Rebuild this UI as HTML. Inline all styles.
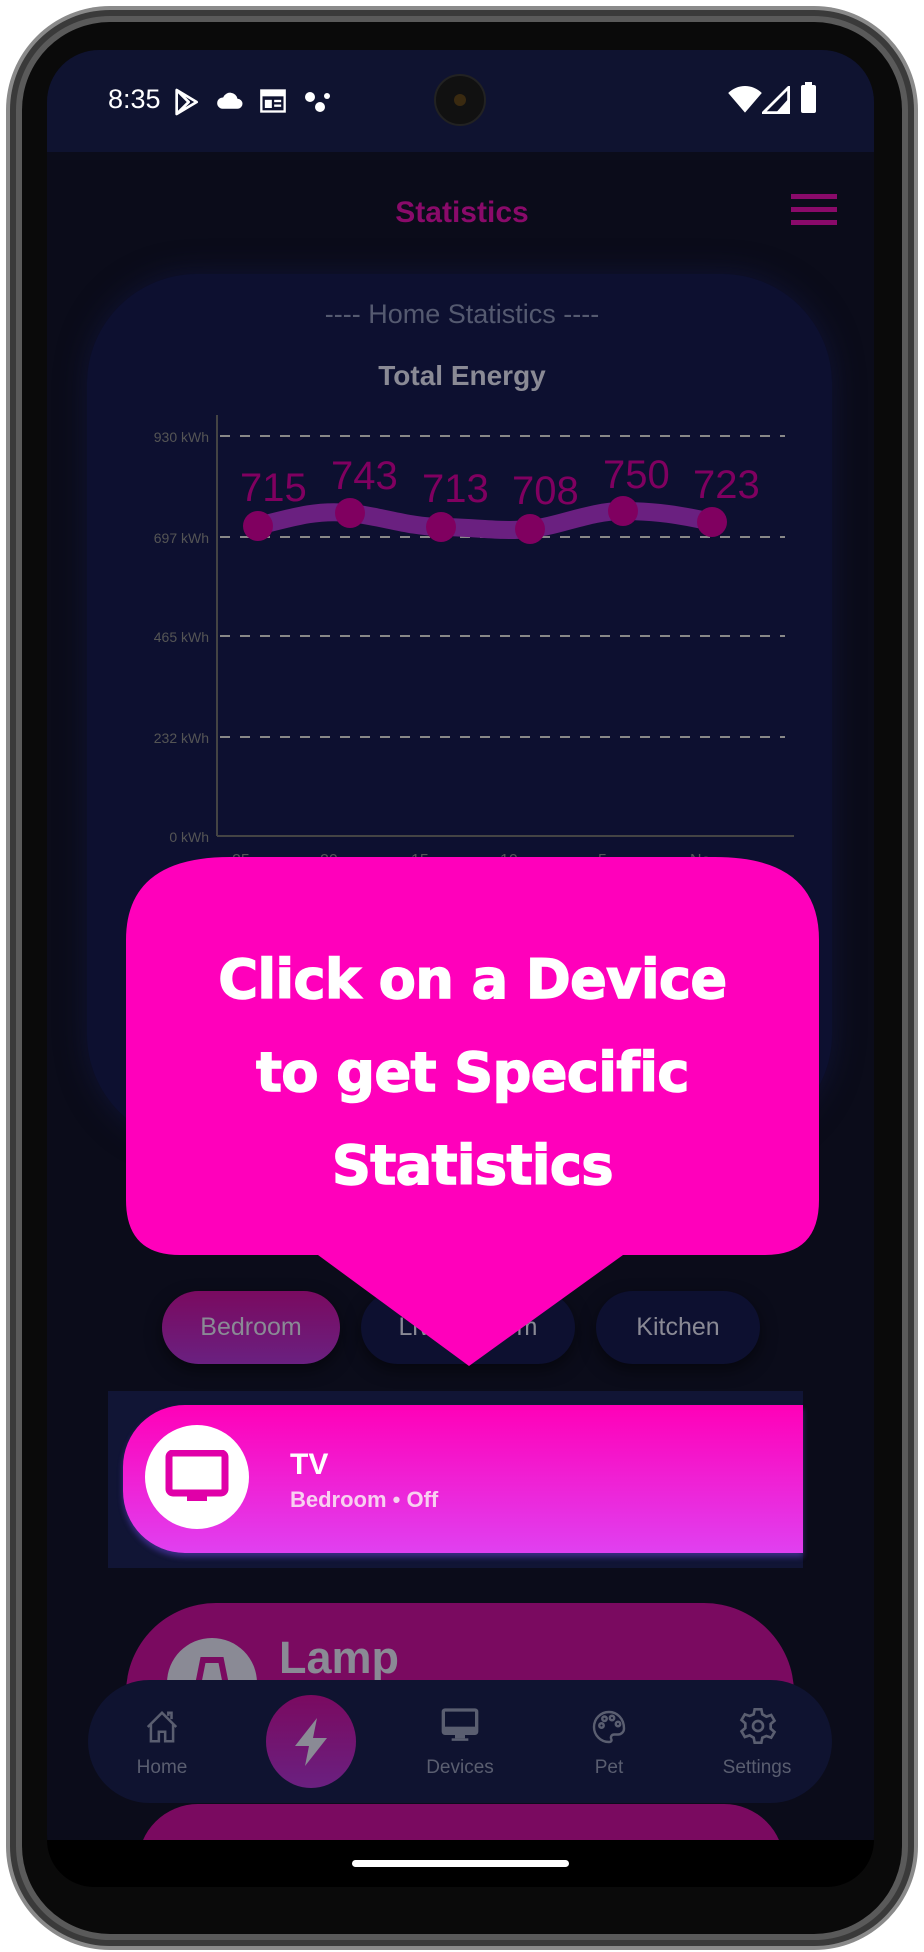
<!DOCTYPE html>
<html><head><meta charset="utf-8"><style>
*{margin:0;padding:0;box-sizing:border-box}
body{width:924px;height:1952px;background:#fff;position:relative;overflow:hidden;font-family:"Liberation Sans",sans-serif}
.abs{position:absolute}
</style></head><body>
<!-- phone frame -->
<div class="abs" style="left:6px;top:6px;width:912px;height:1944px;border-radius:104px;background:#8a8a8a"></div>
<div class="abs" style="left:10px;top:10px;width:904px;height:1936px;border-radius:100px;background:#3a3a3a"></div>
<div class="abs" style="left:16px;top:16px;width:892px;height:1924px;border-radius:94px;background:#5a5a5a"></div>
<div class="abs" style="left:22px;top:22px;width:880px;height:1912px;border-radius:88px;background:#0a0a0a"></div>
<div class="abs" style="left:47px;top:50px;width:827px;height:1837px;border-radius:52px;background:#0b0c1a;overflow:hidden">
  <div class="abs" style="left:0;top:0;width:827px;height:102px;background:#0f1330"></div>
</div>
<!-- status bar -->
<div class="abs" style="left:108px;top:84px;color:#fff;font-size:27px">8:35</div>
<svg class="abs" style="left:170px;top:86px" width="32" height="32" viewBox="0 0 24 24"><path d="M5 3v18l15-9z M5 3l9 9-9 9" fill="none" stroke="#fff" stroke-width="2" stroke-linejoin="round"/></svg>
<svg class="abs" style="left:215px;top:88px" width="30" height="24" viewBox="0 0 24 18"><path d="M6 16h12a4 4 0 0 0 0-8 6 6 0 0 0-11.5-1A4.5 4.5 0 0 0 6 16z" fill="#fff"/></svg>
<svg class="abs" style="left:259px;top:88px" width="28" height="26" viewBox="0 0 24 22"><rect x="2" y="2" width="20" height="18" fill="none" stroke="#fff" stroke-width="2"/><rect x="2" y="2" width="20" height="5" fill="#fff"/><rect x="5" y="10" width="6" height="7" fill="#fff"/><rect x="13" y="10" width="6" height="2" fill="#fff"/><rect x="13" y="14" width="6" height="2" fill="#fff"/></svg>
<svg class="abs" style="left:303px;top:90px" width="30" height="24" viewBox="0 0 30 24"><circle cx="7" cy="7" r="5" fill="#fff"/><circle cx="17" cy="17" r="5" fill="#fff"/><circle cx="24" cy="6" r="3" fill="#fff"/></svg>
<div class="abs" style="left:434px;top:74px;width:52px;height:52px;border-radius:50%;background:#111;border:2px solid #222"><div style="margin:18px auto;width:12px;height:12px;border-radius:50%;background:#3a2a10"></div></div>
<svg class="abs" style="left:728px;top:86px" width="34" height="28" viewBox="0 0 24 20"><path d="M12 19L0 5a17 17 0 0 1 24 0z" fill="#fff"/></svg>
<svg class="abs" style="left:762px;top:86px" width="28" height="28" viewBox="0 0 20 20"><path d="M19 1v18H1z" fill="none" stroke="#fff" stroke-width="2"/><path d="M19 9v10h-9z" fill="#fff"/></svg>
<div class="abs" style="left:801px;top:85px;width:15px;height:28px;background:#fff;border-radius:2px"></div>
<div class="abs" style="left:805px;top:82px;width:7px;height:4px;background:#fff"></div>
<!-- header -->
<div class="abs" style="left:0;width:924px;top:196px;text-align:center;color:#8a0a6a;font-size:30px;font-weight:bold">Statistics</div>
<div class="abs" style="left:791px;top:194px;width:46px;height:5px;background:#8a0a6a"></div>
<div class="abs" style="left:791px;top:207px;width:46px;height:5px;background:#8a0a6a"></div>
<div class="abs" style="left:791px;top:220px;width:46px;height:5px;background:#8a0a6a"></div>
<!-- card -->
<div class="abs" style="left:87px;top:274px;width:745px;height:870px;border-radius:110px;background:#0d1030;box-shadow:0 0 30px rgba(20,25,70,.6)"></div>
<div class="abs" style="left:0;width:924px;top:299px;text-align:center;color:#555a70;font-size:27px">---- Home Statistics ----</div>
<div class="abs" style="left:0;width:924px;top:360px;text-align:center;color:#8a8a95;font-size:28px;font-weight:bold">Total Energy</div>
<svg class="abs" style="left:0;top:400px" width="924" height="480" viewBox="0 400 924 480">
 <g stroke="#888" stroke-width="2" stroke-dasharray="10 10"><line x1="220" y1="436" x2="785" y2="436"/><line x1="220" y1="537" x2="785" y2="537"/><line x1="220" y1="636" x2="785" y2="636"/><line x1="220" y1="737" x2="785" y2="737"/></g>
 <line x1="217" y1="415" x2="217" y2="836" stroke="#444" stroke-width="2"/>
 <line x1="217" y1="836" x2="794" y2="836" stroke="#444" stroke-width="2"/>
 <g fill="#555" font-size="14" text-anchor="end"><text x="209" y="442">930 kWh</text><text x="209" y="543">697 kWh</text><text x="209" y="642">465 kWh</text><text x="209" y="743">232 kWh</text><text x="209" y="842">0 kWh</text></g>
 <g fill="#555" font-size="16"><text x="232" y="865">25</text><text x="320" y="865">20</text><text x="411" y="865">15</text><text x="500" y="865">10</text><text x="598" y="865">5</text><text x="690" y="865">No</text></g>
 <path d="M258 526C300 515 320 510 350 513S410 527 441 527S500 532 530 529S590 511 623 511S680 515 712 522" fill="none" stroke="#6a2080" stroke-width="18"/>
 <g fill="#800060"><circle cx="258" cy="526" r="15"/><circle cx="350" cy="513" r="15"/><circle cx="441" cy="527" r="15"/><circle cx="530" cy="529" r="15"/><circle cx="623" cy="511" r="15"/><circle cx="712" cy="522" r="15"/></g>
 <g fill="#800060" font-size="40"><text x="240" y="501">715</text><text x="331" y="489">743</text><text x="422" y="502">713</text><text x="512" y="504">708</text><text x="603" y="488">750</text><text x="693" y="498">723</text></g>
</svg>
<!-- tabs -->
<div class="abs" style="left:162px;top:1291px;width:178px;height:73px;border-radius:37px;background:linear-gradient(#7a0a60,#6a2080);color:#8a8a95;font-size:25px;text-align:center;line-height:73px;box-shadow:0 6px 16px rgba(0,0,0,.5)">Bedroom</div>
<div class="abs" style="left:361px;top:1291px;width:214px;height:73px;border-radius:37px;background:#0d1030;color:#8a8a95;font-size:25px;text-align:center;line-height:73px;box-shadow:0 6px 16px rgba(0,0,0,.5)">Living Room</div>
<div class="abs" style="left:596px;top:1291px;width:164px;height:73px;border-radius:37px;background:#0d1030;color:#8a8a95;font-size:25px;text-align:center;line-height:73px;box-shadow:0 6px 16px rgba(0,0,0,.5)">Kitchen</div>
<!-- bubble -->
<svg class="abs" style="left:0;top:850px" width="924" height="520" viewBox="0 850 924 520">
 <path d="M230 857H715Q819 857 819 940V1200Q819 1255 765 1255H623L469 1366L318 1255H180Q126 1255 126 1200V940Q126 857 230 857Z" fill="#ff00bb"/>
</svg>
<div class="abs" style="left:126px;width:693px;top:933px;text-align:center;color:#fff;font-family:'DejaVu Sans',sans-serif;font-weight:bold;font-size:54px;line-height:93px;letter-spacing:-0.5px;-webkit-text-stroke:1.5px #fff">Click on a Device<br>to get Specific<br>Statistics</div>
<!-- TV card -->
<div class="abs" style="left:108px;top:1391px;width:695px;height:177px;background:#111535"></div>
<div class="abs" style="left:123px;top:1405px;width:680px;height:148px;border-radius:62px 0 0 62px;background:linear-gradient(#ff00b8,#e040f0);box-shadow:0 4px 6px rgba(120,80,255,.4)"></div>
<div class="abs" style="left:145px;top:1425px;width:104px;height:104px;border-radius:50%;background:#fff"></div>
<svg class="abs" style="left:165px;top:1450px" width="64" height="54" viewBox="0 0 64 54"><rect x="4" y="3" width="56" height="40" rx="4" fill="none" stroke="#e000a8" stroke-width="7"/><rect x="22" y="45" width="20" height="6" fill="#e000a8"/></svg>
<div class="abs" style="left:290px;top:1448px;color:#fff;font-size:30px;font-weight:bold">TV</div>
<div class="abs" style="left:290px;top:1487px;color:#f8d0f0;font-size:22px;font-weight:bold">Bedroom • Off</div>
<!-- lamp card -->
<div class="abs" style="left:126px;top:1603px;width:668px;height:140px;border-radius:90px 90px 0 0;background:#7a0a60"></div>
<div class="abs" style="left:167px;top:1638px;width:90px;height:90px;border-radius:50%;background:#8a8a95;overflow:hidden">
  <svg width="90" height="90" viewBox="0 0 90 90"><path d="M36 22h18l8 40H28z" fill="none" stroke="#7a0a60" stroke-width="6"/></svg>
</div>
<div class="abs" style="left:279px;top:1632px;color:#8a8a95;font-size:45px;font-weight:bold">Lamp</div>
<div class="abs" style="left:138px;top:1804px;width:646px;height:60px;border-radius:80px 80px 0 0;background:#7a0a60"></div>
<div class="abs" style="left:47px;top:1840px;width:827px;height:47px;background:#000;border-radius:0 0 52px 52px"></div>
<div class="abs" style="left:352px;top:1860px;width:217px;height:7px;border-radius:4px;background:#fff"></div>
<!-- nav -->
<div class="abs" style="left:88px;top:1680px;width:744px;height:123px;border-radius:62px;background:#0f1330"></div>
<div class="abs" style="left:266px;top:1695px;width:90px;height:93px;border-radius:50%;background:linear-gradient(#7a0a60,#6a2080)"></div>
<svg class="abs" style="left:291px;top:1716px" width="40" height="52" viewBox="0 0 20 26"><path d="M13 1L2 15h7l-2 10 11-14h-7z" fill="#8a8a95"/></svg>
<svg class="abs" style="left:143px;top:1707px" width="38" height="40" viewBox="0 0 24 24" fill="none" stroke="#5a5e70" stroke-width="1.6"><path d="M3 12L12 3l9 9M5 10v11h5v-6h4v6h5V10M16 5V3h2v4"/></svg>
<svg class="abs" style="left:440px;top:1705px" width="40" height="40" viewBox="0 0 24 24"><rect x="2" y="3" width="20" height="14" rx="1" fill="none" stroke="#5a5e70" stroke-width="2"/><rect x="2" y="13" width="20" height="4" fill="#5a5e70"/><rect x="9" y="17" width="6" height="3" fill="#5a5e70"/><rect x="7" y="20" width="10" height="1.5" fill="#5a5e70"/></svg>
<svg class="abs" style="left:591px;top:1707px" width="36" height="40" viewBox="0 0 24 24" fill="none" stroke="#5a5e70" stroke-width="1.6"><path d="M12 2a10 10 0 1 0 0 20c1.5 0 2-1 1.5-2-.6-1.3 0-3 2-3h2.5a4 4 0 0 0 4-4C22 6.5 17.5 2 12 2z"/><circle cx="7" cy="11" r="1.5"/><circle cx="9" cy="6.5" r="1.5"/><circle cx="14" cy="6" r="1.5"/><circle cx="18" cy="10" r="1.5"/></svg>
<svg class="abs" style="left:738px;top:1705px" width="40" height="42" viewBox="0 0 24 24" fill="none" stroke="#5a5e70" stroke-width="1.6"><circle cx="12" cy="12" r="3"/><path d="M10 2h4l.6 3 2.4 1.4 2.9-1 2 3.4-2.3 2v2.8l2.3 2-2 3.4-2.9-1L14.6 19 14 22h-4l-.6-3L7 17.6l-2.9 1-2-3.4 2.3-2v-2.8l-2.3-2 2-3.4 2.9 1L9.4 5z"/></svg>
<div class="abs" style="left:112px;width:100px;top:1757px;text-align:center;color:#5a5e70;font-size:19px">Home</div>
<div class="abs" style="left:400px;width:120px;top:1757px;text-align:center;color:#5a5e70;font-size:19px">Devices</div>
<div class="abs" style="left:559px;width:100px;top:1757px;text-align:center;color:#5a5e70;font-size:19px">Pet</div>
<div class="abs" style="left:697px;width:120px;top:1757px;text-align:center;color:#5a5e70;font-size:19px">Settings</div>
</body></html>
